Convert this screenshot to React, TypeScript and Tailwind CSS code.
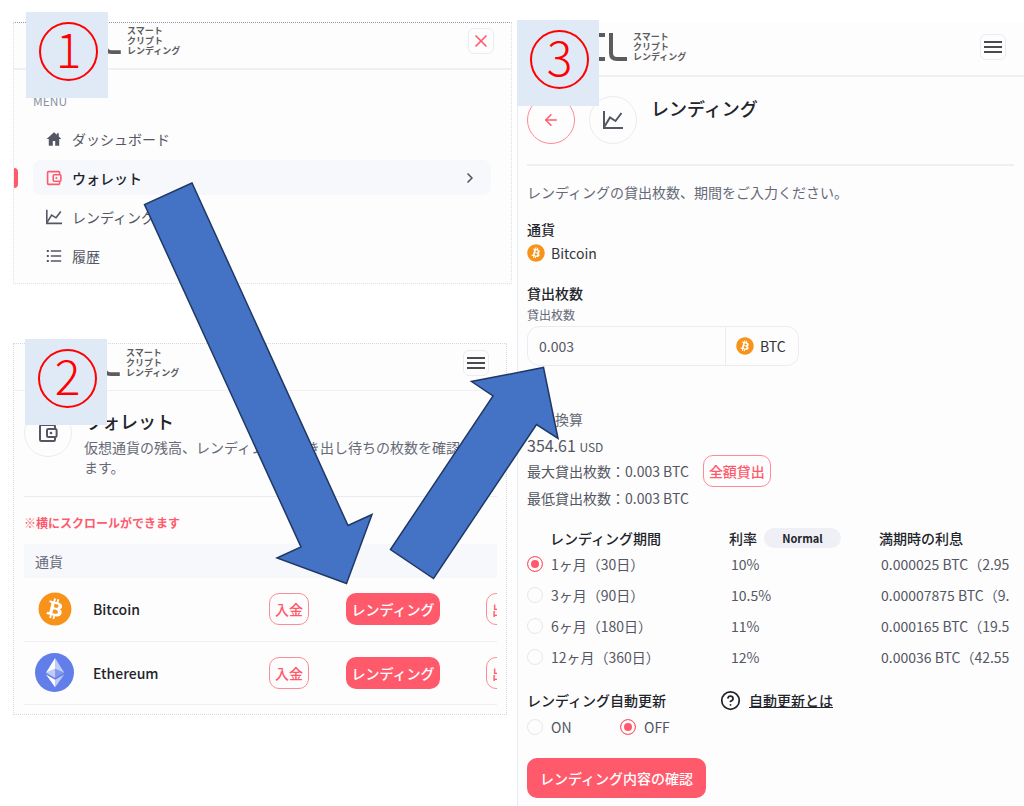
import type { ReactNode } from "react";
import { FaBitcoin } from "react-icons/fa";
import { ArrowLeft, ChevronRight, CircleHelp, X } from "lucide-react";

interface IconProps {
  className?: string;
}

function HomeIcon({ className }: IconProps) {
  return (
    <svg viewBox="0 0 20 20" fill="currentColor" className={className}>
      <path d="M10 1.500L.8 10h2.700v8.500h5v-6h3v6h5V10h2.700l-3.200-3V2.800h-2.400v2z" />
    </svg>
  );
}

function WalletIcon({ className }: IconProps) {
  return (
    <svg viewBox="0 0 20 20" fill="none" stroke="currentColor" strokeWidth={2} className={className}>
      <path d="M17 6V3.200A1.200 1.200 0 0 0 15.800 2H3.200A1.200 1.200 0 0 0 2 3.200v13.600A1.200 1.200 0 0 0 3.200 18h12.600a1.200 1.200 0 0 0 1.200-1.200V14" />
      <rect x="9" y="6" width="9.600" height="8" rx="1.200" />
      <circle cx="13" cy="10" r="1.300" fill="currentColor" stroke="none" />
    </svg>
  );
}

function ChartIcon({ className }: IconProps) {
  return (
    <svg viewBox="0 0 20 20" fill="none" stroke="currentColor" strokeWidth={2} className={className}>
      <path d="M1 1v17h19" />
      <path d="M1.500 16.500L7 7.500l5.500 3.500L18.500 3" />
    </svg>
  );
}

function ListIcon({ className }: IconProps) {
  return (
    <svg viewBox="0 0 20 20" fill="currentColor" className={className}>
      <path d="M1 2.500h2.500V5H1zM6 2.800h13v2H6zM1 8.800h2.500v2.500H1zM6 9h13v2H6zM1 15h2.500v2.500H1zM6 15.300h13v2H6z" />
    </svg>
  );
}

function EthereumIcon({ className }: IconProps) {
  return (
    <svg viewBox="0 0 32 32" className={className}>
      <circle cx="16" cy="16" r="16" fill="#627eea" />
      <g fill="#fff">
        <path fillOpacity=".6" d="M16.500 4v8.870l7.500 3.350z" />
        <path d="M16.500 4L9 16.220l7.500-3.350z" />
        <path fillOpacity=".6" d="M16.500 21.970V28L24 17.620z" />
        <path d="M16.500 28v-6.030L9 17.620z" />
        <path fillOpacity=".2" d="M16.500 20.570l7.500-4.350-7.500-3.350z" />
        <path fillOpacity=".6" d="M9 16.220l7.500 4.350v-7.700z" />
      </g>
    </svg>
  );
}

function BitcoinIcon({ className }: IconProps) {
  return (
    <span className="shrink-0 rounded-full bg-white">
      <FaBitcoin className={`text-[#f7931a] ${className}`} />
    </span>
  );
}

function Logo({ className }: { className: string }) {
  return (
    <div className="flex items-center gap-[6px] text-[#5c5c5e]">
      <svg viewBox="0 0 90 28" className={className} fill="none" stroke="currentColor" strokeWidth={4}>
        <path d="M32 2H8q-5 0-5 5v2q0 5 5 5h18q5 0 5 5v2q0 5-5 5H2" />
        <path d="M68 2H46q-6 0-6 6v12q0 6 6 6h22" />
        <path d="M74 0v20q0 6 6 6h10" />
      </svg>
      <div className="text-[9px] leading-[10px] font-bold">
        <p>スマート</p>
        <p>クリプト</p>
        <p>レンディング</p>
      </div>
    </div>
  );
}

function StepBadge({ step, className }: { step: number; className: string }) {
  return (
    <div className={`absolute h-[86px] w-[82px] bg-[#dfeaf6] pt-[10px] pl-[13px] ${className}`}>
      <div className="flex size-[59px] items-center justify-center rounded-full border-2 border-[#ff0000] pb-[10px] text-5xl leading-none font-light text-[#ff0000]">
        {step}
      </div>
    </div>
  );
}

function MenuButton() {
  return (
    <button
      type="button"
      aria-label="メニュー"
      className="flex size-[26px] flex-col items-center justify-center gap-[3px] rounded-md border border-[#ececef]"
    >
      <span className="h-[2px] w-[18px] bg-[#4a4a50]" />
      <span className="h-[2px] w-[18px] bg-[#4a4a50]" />
      <span className="h-[2px] w-[18px] bg-[#4a4a50]" />
    </button>
  );
}

const menu = [
  { label: "ダッシュボード", icon: HomeIcon },
  { label: "ウォレット", icon: WalletIcon, active: true },
  { label: "レンディング", icon: ChartIcon },
  { label: "履歴", icon: ListIcon },
];

function MenuPanel() {
  return (
    <section className="relative border border-dotted border-[#dfe1e6] border-t-[#8c97aa] bg-[#fdfdfd]">
      <header className="flex h-[47px] items-center justify-between border-b-2 border-[#f0f0f2] pr-[17px] pb-[9px] pl-[23px]">
        <Logo className="h-[26px] w-[84px]" />
        <button
          type="button"
          aria-label="閉じる"
          className="flex size-[26px] items-center justify-center rounded-md border border-[#ececef] text-[#ff5a6b]"
        >
          <X size={20} strokeWidth={2} />
        </button>
      </header>
      <nav className="pt-[22px] pr-5 pb-[10px] pl-[19px]">
        <h2 className="text-xs leading-[18px] text-[#8d91a3]">MENU</h2>
        <ul className="mt-[11px] flex flex-col gap-1">
          {menu.map(({ label, icon: Icon, active }) => (
            <li key={label}>
              <a
                href="#"
                className={`flex h-[35px] items-center rounded-lg px-[13px] text-sm ${
                  active ? "bg-[#f7f8fc] font-medium text-[#22242b]" : "text-[#545763]"
                }`}
              >
                {active && <span className="absolute left-0 h-5 w-1 rounded-r bg-[#ff5a6b]" />}
                <Icon className={`mr-[10px] size-4 ${active ? "text-[#ff5a6b]" : ""}`} />
                {label}
                {active && <ChevronRight size={16} strokeWidth={2.5} className="ml-auto text-[#545763]" />}
              </a>
            </li>
          ))}
        </ul>
      </nav>
      <StepBadge step={1} className="-top-[11px] left-3" />
    </section>
  );
}

const outlineButton =
  "h-8 rounded-[10px] border border-[#ff8a96] text-sm font-medium text-[#ff5a6b] whitespace-nowrap";

function WalletRow({ name, icon }: { name: string; icon: ReactNode }) {
  return (
    <tr className="h-[63px] border-b border-[#f0f0f2]">
      <td>
        <div className="flex items-center text-sm font-medium text-[#22242b]">
          <span className="mr-2 flex w-[61px] justify-center">{icon}</span>
          {name}
        </div>
      </td>
      <td>
        <button type="button" className={`${outlineButton} w-10`}>入金</button>
      </td>
      <td>
        <button type="button" className="h-8 w-[94px] rounded-[10px] bg-[#ff5a6b] text-sm font-medium text-white">
          レンディング
        </button>
      </td>
      <td>
        <button type="button" className={`${outlineButton} w-10`}>出金</button>
      </td>
    </tr>
  );
}

function WalletPanel() {
  return (
    <section className="relative mt-[59px] mr-[5px] border border-dotted border-[#d3d8e2] bg-[#fdfdfd]">
      <header className="flex h-[47px] items-center justify-between border-b border-[#f0f0f2] pr-[17px] pb-[9px] pl-[22px]">
        <Logo className="h-[26px] w-[84px]" />
        <MenuButton />
      </header>
      <div className="pt-[18px] pr-[9px] pb-[9px] pl-[10px]">
        <div className="flex gap-3 border-b border-[#ebecf1] pb-[19px]">
          <div className="flex size-12 shrink-0 items-center justify-center rounded-full border border-[#ececef] text-[#545763]">
            <WalletIcon className="size-5" />
          </div>
          <div>
            <h2 className="text-lg leading-6 font-medium text-[#22242b]">ウォレット</h2>
            <p className="mt-1 text-sm leading-5 text-[#666a77]">
              仮想通貨の残高、レンディング、引き出し待ちの枚数を確認できます。
            </p>
          </div>
        </div>
        <p className="mt-4 text-xs leading-5 font-bold text-[#ff5a6b]">※横にスクロールができます</p>
        <div className="mt-[11px] overflow-x-auto [scrollbar-width:none]">
          <table className="w-[542px] table-fixed text-left">
            <colgroup>
              <col className="w-[245px]" />
              <col className="w-[77px]" />
              <col className="w-[140px]" />
              <col className="w-[80px]" />
            </colgroup>
            <thead>
              <tr className="h-[34px] bg-[#f7f8fc]">
                <th colSpan={4} className="pl-[11px] text-sm font-normal text-[#666a77]">通貨</th>
              </tr>
            </thead>
            <tbody>
              <WalletRow name="Bitcoin" icon={<BitcoinIcon className="size-[34px]" />} />
              <WalletRow name="Ethereum" icon={<EthereumIcon className="size-[39px]" />} />
            </tbody>
          </table>
        </div>
      </div>
      <StepBadge step={2} className="-top-[5px] left-[11px]" />
    </section>
  );
}

const radio =
  "size-4 shrink-0 appearance-none rounded-full border border-[#e6e7ea] checked:border-[#ff5a6b] checked:bg-[#ff5a6b] checked:shadow-[inset_0_0_0_3px_#fdfdfd]";

const terms = [
  { term: "1ヶ月（30日）", rate: "10%", interest: "0.000025 BTC（2.95" },
  { term: "3ヶ月（90日）", rate: "10.5%", interest: "0.00007875 BTC（9." },
  { term: "6ヶ月（180日）", rate: "11%", interest: "0.000165 BTC（19.5" },
  { term: "12ヶ月（360日）", rate: "12%", interest: "0.00036 BTC（42.55" },
];

function LendingPanel() {
  return (
    <section className="relative border-l border-[#e3edf7] bg-[#fdfdfd]">
      <header className="flex h-[55px] items-center justify-between border-b-2 border-[#f0f0f2] pr-[18px] pb-1 pl-[19px]">
        <Logo className="h-7 w-[90px]" />
        <MenuButton />
      </header>
      <form className="pt-[19px] pr-[10px] pl-[9px] text-sm leading-5 text-[#545763]">
        <div className="flex gap-[14px] border-b-2 border-[#f0f0f2] pb-5">
          <a
            href="#"
            aria-label="戻る"
            className="flex size-12 items-center justify-center rounded-full border border-[#ff8a96] text-[#ff5a6b]"
          >
            <ArrowLeft size={18} />
          </a>
          <div className="flex size-12 items-center justify-center rounded-full border border-[#ececef]">
            <ChartIcon className="size-5" />
          </div>
          <h1 className="text-lg leading-6 font-medium text-[#22242b]">レンディング</h1>
        </div>
        <p className="mt-4 text-[#666a77]">レンディングの貸出枚数、期間をご入力ください。</p>

        <h2 className="mt-[17px] font-medium text-[#22242b]">通貨</h2>
        <div className="mt-1 flex items-center gap-[6px] text-[#33353d]">
          <BitcoinIcon className="size-[18px]" />
          Bitcoin
        </div>

        <h2 className="mt-5 font-medium text-[#22242b]">貸出枚数</h2>
        <label htmlFor="amount" className="mt-1 block text-xs leading-4 text-[#666a77]">貸出枚数</label>
        <div className="mt-[3px] flex h-10 w-[272px] rounded-xl border border-[#ececef]">
          <input id="amount" defaultValue="0.003" className="min-w-0 flex-1 bg-transparent px-[11px] outline-none" />
          <div className="flex w-[73px] items-center gap-[6px] border-l border-[#ececef] pl-[10px] text-[#33353d]">
            <BitcoinIcon className="size-[18px]" />
            BTC
          </div>
        </div>

        <p className="mt-[43px] text-[#666a77]">USD換算</p>
        <p className="mt-[6px] text-base leading-5">
          354.61 <span className="text-xs">USD</span>
        </p>
        <div className="flex items-center gap-[14px]">
          最大貸出枚数：0.003 BTC
          <button type="button" className={`${outlineButton} w-[68px]`}>全額貸出</button>
        </div>
        <p className="mt-px">最低貸出枚数：0.003 BTC</p>

        <div className="mt-5 overflow-x-auto [scrollbar-width:none]">
          <table className="w-full table-fixed text-left whitespace-nowrap">
            <colgroup>
              <col className="w-[202px]" />
              <col className="w-[150px]" />
              <col />
            </colgroup>
            <thead>
              <tr className="h-5 text-[#22242b]">
                <th className="pl-[23px] font-medium">レンディング期間</th>
                <th className="font-medium">
                  <div className="flex items-center gap-[7px]">
                    利率
                    <span className="w-[77px] rounded-full bg-[#eef0f5] text-center text-[11px] font-bold">Normal</span>
                  </div>
                </th>
                <th className="font-medium">満期時の利息</th>
              </tr>
            </thead>
            <tbody>
              {terms.map(({ term, rate, interest }, i) => (
                <tr key={term} className="h-[31px]">
                  <td>
                    <label className="flex items-center gap-2">
                      <input type="radio" name="term" defaultChecked={i === 0} className={radio} />
                      {term}
                    </label>
                  </td>
                  <td className="pl-[2px]">{rate}</td>
                  <td className="pl-[2px]">{interest}</td>
                </tr>
              ))}
            </tbody>
          </table>
        </div>

        <div className="mt-[18px] flex text-[#22242b]">
          <h2 className="w-[193px] font-medium">レンディング自動更新</h2>
          <a href="#" className="flex items-center gap-2 font-medium underline">
            <CircleHelp size={21} className="-my-1" />
            自動更新とは
          </a>
        </div>
        <div className="mt-[7px] flex">
          <label className="flex w-[93px] items-center gap-2">
            <input type="radio" name="renewal" className={radio} />
            ON
          </label>
          <label className="flex items-center gap-2">
            <input type="radio" name="renewal" defaultChecked className={radio} />
            OFF
          </label>
        </div>
        <button type="button" className="mt-[21px] h-10 rounded-[10px] bg-[#ff5a6b] px-[13px] font-medium text-white">
          レンディング内容の確認
        </button>
      </form>
      <StepBadge step={3} className="-top-[2px] -left-px" />
    </section>
  );
}

export default function App() {
  return (
    <div className="relative min-h-screen overflow-hidden bg-white font-['Noto_Sans_CJK_JP',sans-serif]">
      <div className="grid min-h-screen grid-cols-[minmax(0,499fr)_minmax(0,507fr)] gap-[5px] pt-[22px] pl-[13px]">
        <div>
          <MenuPanel />
          <WalletPanel />
        </div>
        <LendingPanel />
      </div>

      {/* Arrows that lead from one step to the next */}
      <svg
        className="pointer-events-none absolute top-0 left-0"
        width="1024"
        height="806"
        fill="#4472c4"
        stroke="#1f3864"
        strokeWidth="1.500"
      >
        <path d="M192 183L144.500 204.500 301 547 277 558 346.500 583.500 372 514.500 348 525.500z" />
        <path d="M390.500 549.500L493 396 471.500 381.500 543.500 367.500 558 438.500 536.500 424.500 433.500 578.500z" />
      </svg>
    </div>
  );
}
